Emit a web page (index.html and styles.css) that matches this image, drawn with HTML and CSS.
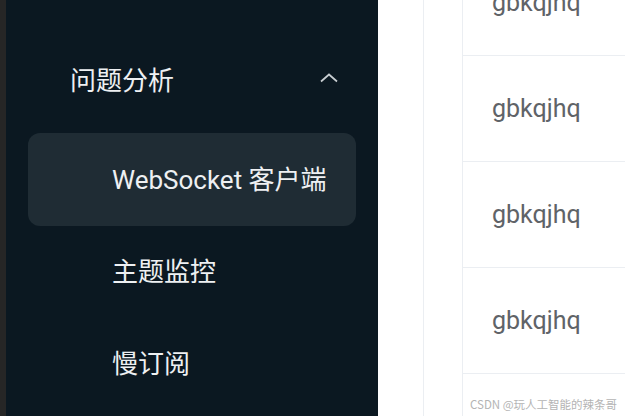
FILE: index.html
```html
<!DOCTYPE html>
<html lang="zh">
<head>
<meta charset="utf-8">
<link rel="stylesheet" href="styles.css">
</head>
<body>
<div class="app">
  <div class="strip"></div>
  <aside class="sidebar">
    <div class="group-title">
      <span>问题分析</span>
      <svg class="chev" width="20" height="12" viewBox="0 0 20 12"><path d="M2 9.5 L10 2.5 L18 9.5" fill="none" stroke="#c9ced2" stroke-width="1.7"/></svg>
    </div>
    <ul class="menu">
      <li class="item active">WebSocket 客户端</li>
      <li class="item">主题监控</li>
      <li class="item">慢订阅</li>
    </ul>
  </aside>
  <main class="main">
    <div class="col c1"></div>
    <div class="col c2"></div>
    <div class="cells">
      <div class="cell">gbkqjhq</div>
      <div class="cell">gbkqjhq</div>
      <div class="cell">gbkqjhq</div>
      <div class="cell">gbkqjhq</div>
    </div>
  </main>
</div>
<div class="watermark">CSDN @玩人工智能的辣条哥</div>
</body>
</html>
```

FILE: styles.css
```css
html, body {
  margin: 0;
  padding: 0;
  width: 625px;
  height: 416px;
  overflow: hidden;
  background: #fff;
  font-family: Roboto, "Noto Sans CJK SC", sans-serif;
}
.app {
  display: flex;
  height: 416px;
  overflow: hidden;
}
.strip {
  width: 6px;
  background: #262626;
  flex: none;
}
.sidebar {
  width: 372px;
  flex: none;
  background: #0b1821;
  color: #eef0f2;
}
.group-title {
  margin-top: 50px;
  height: 56px;
  display: flex;
  align-items: center;
  justify-content: space-between;
  padding: 0 39px 0 64px;
  font-size: 26px;
}
.chev {
  display: block;
}
.menu {
  list-style: none;
  margin: 27px 0 0;
  padding: 0;
}
.item {
  height: 92px;
  margin: 0 22px;
  padding: 0 0 5px 84px;
  box-sizing: border-box;
  display: flex;
  align-items: center;
  font-size: 26px;
  border-radius: 12px;
}
.item.active {
  background: #1f2c34;
  height: 93px;
}
.main {
  flex: 1;
  display: flex;
  min-width: 0;
}
.col {
  flex: none;
  border-right: 1px solid #ebeef2;
}
.c1 { width: 45px; }
.c2 { width: 38px; }
.cells {
  flex: 1;
  margin-top: -50px;
}
.cell {
  height: 105px;
  border-bottom: 1px solid #ebeef2;
  display: flex;
  align-items: center;
  padding-left: 29px;
  box-sizing: border-box;
  height: 106px;
  font-size: 25px;
  color: #5f6368;
}
.watermark {
  position: absolute;
  left: 470px;
  top: 396px;
  white-space: nowrap;
  font-size: 11.5px;
  color: #b4b4b4;
  font-family: "Noto Sans CJK SC", sans-serif;
}
```
